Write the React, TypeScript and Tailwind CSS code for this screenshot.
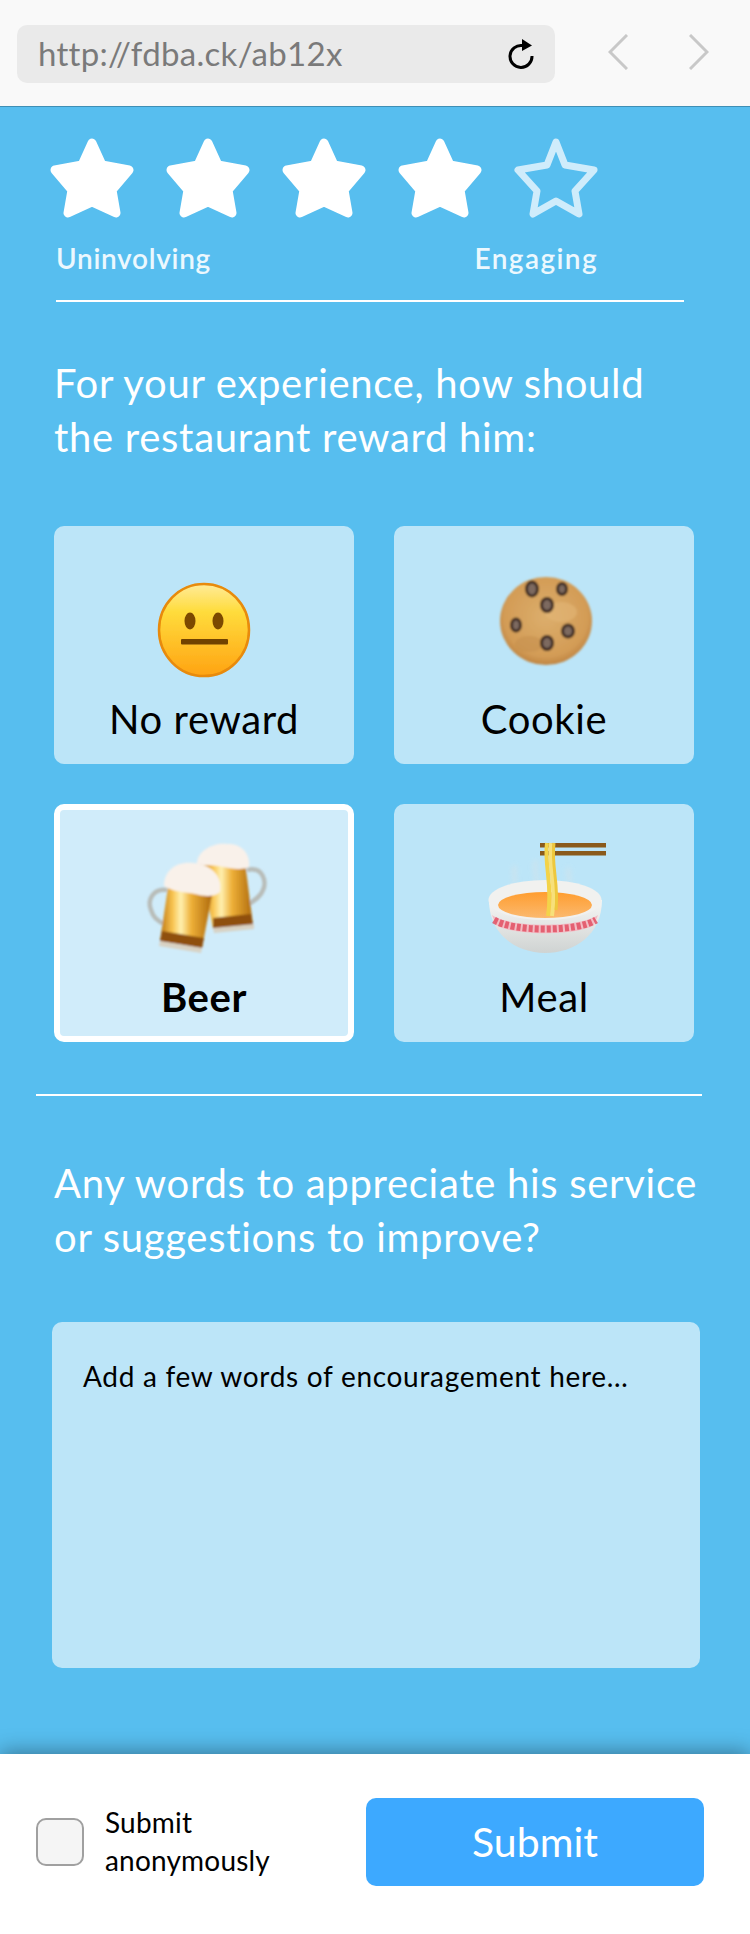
const FONT = "font-['Lato','Open_Sans',sans-serif]";

const Star = ({ filled }: { filled: boolean }) => (
  <svg viewBox="0 0 84 80" className="h-[80px] w-[84px]">
    {filled ? (
      <path
        d="M42 5 L52 27 L79 32 L62 52 L66 75 L42 64 L18 75 L22 52 L5 32 L32 27 Z"
        fill="#fff"
        stroke="#fff"
        strokeWidth="9"
        strokeLinejoin="round"
      />
    ) : (
      <path
        d="M42 4 L51 27 L80 32 L61 53 L65 76 L42 63 L19 76 L23 53 L4 32 L33 27 Z"
        fill="none"
        stroke="#cfecfb"
        strokeWidth="7"
        strokeLinejoin="round"
      />
    )}
  </svg>
);

const NeutralFace = () => (
  <svg viewBox="0 0 150 130" className="h-[130px] w-[150px]">
    <defs>
      <linearGradient id="face" x1="0" y1="0" x2="0" y2="1">
        <stop offset="0" stopColor="#ffeb99" />
        <stop offset="0.3" stopColor="#ffdc3c" />
        <stop offset="1" stopColor="#ffa312" />
      </linearGradient>
      <filter id="faceSoft">
        <feGaussianBlur stdDeviation="0.5" />
      </filter>
    </defs>
    <g filter="url(#faceSoft)">
      <ellipse cx="75" cy="68" rx="45" ry="46" fill="url(#face)" stroke="#e88a08" strokeWidth="2.5" />
      <ellipse cx="61" cy="59" rx="5.5" ry="8.5" fill="#7c4a03" />
      <ellipse cx="89" cy="59" rx="5.5" ry="8.5" fill="#7c4a03" />
      <rect x="52" y="77" width="47" height="5.5" rx="1" fill="#6f4204" />
    </g>
  </svg>
);

const Cookie = () => {
  const chips = [
    [63, 27, 7, 8.5],
    [93, 27, 6, 7],
    [78, 43, 7, 8],
    [47, 63, 6, 7.5],
    [99, 69, 7, 7.5],
    [78, 81, 7, 8],
  ];
  return (
    <svg viewBox="0 0 150 130" className="h-[130px] w-[150px]">
      <defs>
        <radialGradient id="dough" cx="0.5" cy="0.45" r="0.6">
          <stop offset="0" stopColor="#dcae6c" />
          <stop offset="0.75" stopColor="#d39c56" />
          <stop offset="1" stopColor="#b67a3a" />
        </radialGradient>
        <filter id="soft">
          <feGaussianBlur stdDeviation="0.8" />
        </filter>
      </defs>
      <g filter="url(#soft)">
        <ellipse cx="77" cy="59" rx="46" ry="44" fill="url(#dough)" />
        <ellipse cx="92" cy="50" rx="16" ry="10" fill="#e2b677" opacity="0.6" />
        <ellipse cx="60" cy="82" rx="14" ry="8" fill="#c48d4c" opacity="0.5" />
        {chips.map(([x, y, rx, ry]) => (
          <g key={`${x}-${y}`}>
            <ellipse cx={x} cy={y} rx={rx} ry={ry} fill="#3d2a20" />
            <ellipse cx={x} cy={y} rx={rx - 3} ry={ry - 3} fill="#7d6a60" />
          </g>
        ))}
      </g>
    </svg>
  );
};

const Beer = () => (
  <svg viewBox="0 0 150 130" className="h-[130px] w-[150px]">
    <defs>
      <linearGradient id="ale" x1="0" y1="0" x2="1" y2="0">
        <stop offset="0" stopColor="#bd7510" />
        <stop offset="0.25" stopColor="#f9c653" />
        <stop offset="0.4" stopColor="#fff0b0" />
        <stop offset="0.6" stopColor="#eeb038" />
        <stop offset="1" stopColor="#ae6a0e" />
      </linearGradient>
      <filter id="soft2">
        <feGaussianBlur stdDeviation="1" />
      </filter>
    </defs>
    <g filter="url(#soft2)">
      <path d="M118 30 C134 26 138 42 134 50 C132 56 126 60 120 64" fill="none" stroke="#b8bcb8" strokeWidth="4.5" />
      <path d="M71 22 L116 22 L124 85 L84 89 Z" fill="url(#ale)" />
      <path d="M84 78 L122 74 L124 85 L84 89 Z" fill="#8f4f0a" />
      <path d="M84 88 L125 84 L125 89 L85 93 Z" fill="#d8d2c4" />
      <path d="M68 24 C68 10 86 2 98 4 C112 3 122 14 120 27 C112 31 100 28 90 26 C82 25 76 26 68 24 Z" fill="#f9f1ea" />
      <path d="M38 50 C24 48 18 60 22 70 C24 77 30 82 36 84" fill="none" stroke="#b8bcb8" strokeWidth="4.5" />
      <path d="M39 47 L83 55 L73 108 L31 101 Z" fill="url(#ale)" />
      <path d="M33 91 L75 98 L73 108 L31 101 Z" fill="#8f4f0a" />
      <path d="M31 101 L73 108 L72 113 L30 106 Z" fill="#d8d2c4" />
      <path d="M35 46 C35 30 48 21 64 23 C82 24 94 36 91 52 C84 58 74 56 66 54 C56 52 45 52 35 46 Z" fill="#f9f1ea" />
    </g>
  </svg>
);

const Noodles = () => (
  <svg viewBox="0 0 150 130" className="h-[130px] w-[150px]">
    <defs>
      <linearGradient id="bowl" x1="0" y1="0" x2="0" y2="1">
        <stop offset="0" stopColor="#f6f6f4" />
        <stop offset="1" stopColor="#cfd3d2" />
      </linearGradient>
      <linearGradient id="soup" x1="0" y1="0" x2="0" y2="1">
        <stop offset="0" stopColor="#ff9d2e" />
        <stop offset="1" stopColor="#fbb96f" />
      </linearGradient>
      <filter id="soft3">
        <feGaussianBlur stdDeviation="0.7" />
      </filter>
      <filter id="steam">
        <feGaussianBlur stdDeviation="2.5" />
      </filter>
    </defs>
    <g filter="url(#steam)" fill="none" stroke="#d3e3ea" strokeWidth="4" opacity="0.7">
      <path d="M46 26 C43 34 48 38 45 44" />
      <path d="M67 20 C64 30 69 36 67 44" />
      <path d="M100 28 C97 34 102 38 100 44" />
    </g>
    <g filter="url(#soft3)">
      <path d="M20 60 C20 95 48 113 76 113 C105 113 133 95 133 60 Z" fill="url(#bowl)" />
      <ellipse cx="76" cy="60" rx="56.5" ry="20" fill="#f1f1ef" />
      <ellipse cx="76" cy="65" rx="47" ry="13" fill="url(#soup)" />
      <path d="M23 75 C42 88 110 88 129 75 L125 85 C108 96 44 96 27 85 Z" fill="#f2bcc4" />
      <path
        d="M25 80 C44 92 108 92 127 80"
        fill="none"
        stroke="#e0485c"
        strokeWidth="7"
        strokeDasharray="4 2"
        opacity="0.8"
      />
      <rect x="71" y="3" width="66" height="4.5" fill="#8a5a1c" />
      <rect x="71" y="11" width="66" height="4.5" fill="#8a5a1c" />
      <path d="M78 3 C75 26 84 44 79 76" fill="none" stroke="#f3d34a" strokeWidth="4" />
      <path d="M82 3 C79 26 88 44 83 76" fill="none" stroke="#f7e07a" strokeWidth="4" />
      <path d="M85 3 C82 26 90 44 87 70" fill="none" stroke="#eec83c" strokeWidth="3" />
    </g>
  </svg>
);

const rewards = [
  { label: "No reward", icon: <NeutralFace /> },
  { label: "Cookie", icon: <Cookie /> },
  { label: "Beer", icon: <Beer />, selected: true },
  { label: "Meal", icon: <Noodles /> },
];

const App = () => {
  return (
    <div className={`flex h-[1934px] w-[750px] flex-col overflow-hidden bg-[#57beef] ${FONT}`}>
      <header className="flex h-[107px] shrink-0 items-start border-b border-[#3f8fb5] bg-[#f9f9f9] pt-[25px] pl-[17px]">
        <div className="flex h-[58px] w-[538px] items-center justify-between rounded-[10px] bg-[#eaeaea] pr-[21px] pl-[21px]">
          <span className="text-[33px] tracking-[0.3px] text-[#7a7a7a]">http://fdba.ck/ab12x</span>
          <svg viewBox="0 0 26 30" className="h-[30px] w-[26px]">
            <path d="M14.5 6.5 A11 11 0 1 0 24 17" fill="none" stroke="#000" strokeWidth="3" />
            <path d="M14 0 L24 6.5 L14 12 Z" fill="#000" />
          </svg>
        </div>
        <svg viewBox="0 0 20 36" className="mt-[9px] ml-[53px] h-[36px] w-[20px]">
          <path d="M19 1 L2 18 L19 35" fill="none" stroke="#c8c8c8" strokeWidth="3" />
        </svg>
        <svg viewBox="0 0 20 36" className="mt-[9px] ml-[61px] h-[36px] w-[20px]">
          <path d="M1 1 L18 18 L1 35" fill="none" stroke="#c8c8c8" strokeWidth="3" />
        </svg>
      </header>

      <main className="flex-1 text-white">
        <div className="mt-[31px] ml-[50px] flex gap-[32px]">
          {[1, 2, 3, 4, 5].map((n) => (
            <Star key={n} filled={n < 5} />
          ))}
        </div>
        <div className="mt-[22px] ml-[56px] flex w-[542px] justify-between text-[28px] leading-[36px] font-semibold text-[#ecf8fe]">
          <span className="tracking-[0.7px]">Uninvolving</span>
          <span className="tracking-[1.4px]">Engaging</span>
        </div>
        <div className="mt-[24px] ml-[56px] h-[2px] w-[628px] bg-white" />

        <p className="mt-[54px] ml-[54px] text-[40px] leading-[54px] tracking-[0.7px]">
          For your experience, how should
          <br />
          the restaurant reward him:
        </p>

        <div className="mt-[62px] ml-[54px] grid w-[640px] grid-cols-2 gap-[40px]">
          {rewards.map((r) => (
            <div
              key={r.label}
              className={
                r.selected
                  ? "box-border flex h-[238px] flex-col items-center rounded-[10px] border-[6px] border-white bg-[#d0ecfa] pt-[30px]"
                  : "flex h-[238px] flex-col items-center rounded-[10px] bg-[#bce5f8] pt-[36px]"
              }
            >
              {r.icon}
              <span
                className={`mt-[5px] text-[40px] leading-[44px] tracking-[0.6px] text-black ${r.selected ? "font-bold" : ""}`}
              >
                {r.label}
              </span>
            </div>
          ))}
        </div>

        <div className="mt-[52px] ml-[36px] h-[2px] w-[666px] bg-white" />

        <p className="mt-[60px] ml-[54px] text-[40px] leading-[54px] tracking-[0.7px]">
          Any words to appreciate his service
          <br />
          or suggestions to improve?
        </p>

        <div className="mt-[58px] ml-[52px] h-[346px] w-[648px] rounded-[10px] bg-[#bce5f8] pt-[36px] pl-[31px] text-[28px] leading-[36px] tracking-[0.7px] text-black">
          Add a few words of encouragement here…
        </div>
      </main>

      <footer className="relative flex h-[180px] shrink-0 items-center bg-white pr-[46px] pb-[4px] pl-[36px] shadow-[0_-2px_20px_rgba(0,0,0,0.38)]">
        <div className="box-border h-[48px] w-[48px] rounded-[10px] border-[2px] border-[#a0a0a0] bg-[#f5f5f5]" />
        <div className="mb-[2px] ml-[21px] w-[240px] text-[28px] leading-[38px] tracking-[0.2px] text-black">
          Submit
          <br />
          anonymously
        </div>
        <button className="ml-auto h-[88px] w-[338px] rounded-[10px] bg-[#3da9ff] text-[41px] text-white">
          Submit
        </button>
      </footer>
    </div>
  );
};

export default App;
